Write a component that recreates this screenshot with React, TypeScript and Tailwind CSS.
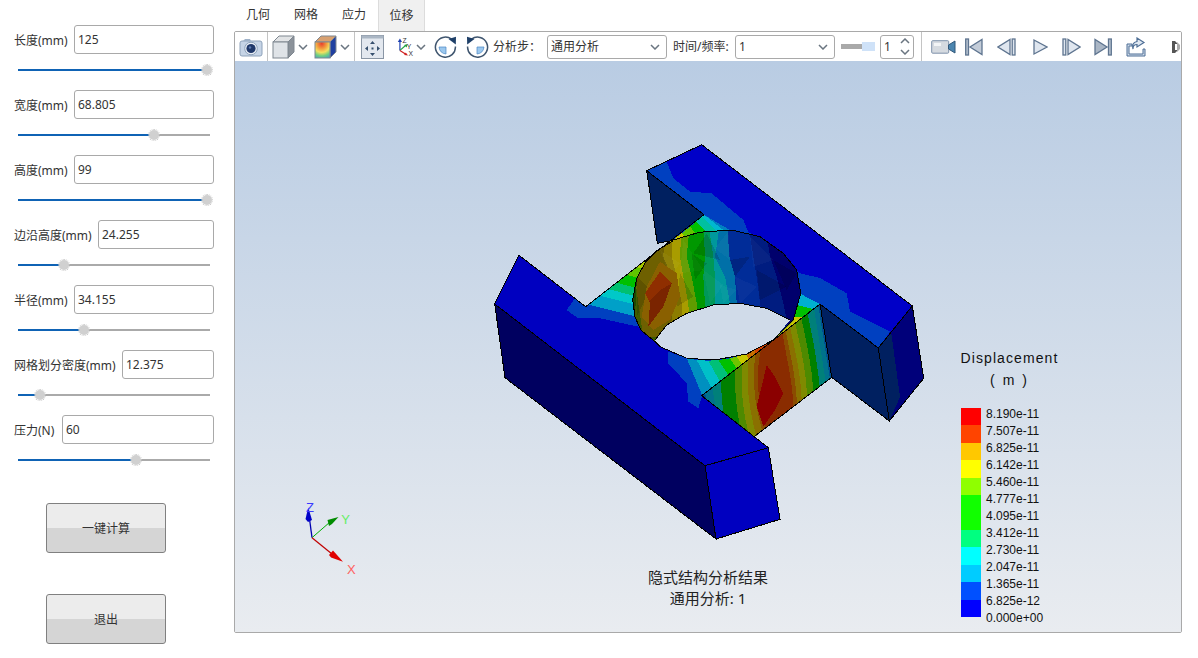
import React from "react";

type P = [number, number];
const FONT = "[font-family:'Noto_Sans','Noto_Sans_CJK_SC',sans-serif]";

const z5 = (x: number, y: number): P => [480 + x / 3, 130 + y / 3];
const z6 = (x: number, y: number): P => [640 + x / 3, 130 + y / 3];
const str = (ps: P[]) => ps.map((p) => `${p[0].toFixed(1)},${p[1].toFixed(1)}`).join(" ");
const z6s = (a: number[][]) => str(a.map(([x, y]) => z6(x, y)));
const z5s = (a: number[][]) => str(a.map(([x, y]) => z5(x, y)));

const P0: P = [701.7, 395.7];
const U: P = [118.3, -91.7];
const V: P = [11.7, 73.3];
const face = (s: number, t: number): P => [P0[0] + s * U[0] + t * V[0], P0[1] + s * U[1] + t * V[1]];

const rim: P[] = [
  z5(575, 335), z5(530, 362), z5(497, 395), z5(470, 445), z5(458, 510), z5(465, 560), z5(482, 600), z5(525, 635),
  z6(60, 650), z6(140, 685), z6(225, 690), z6(320, 672), z6(400, 630), z6(460, 570), z6(482, 490), z6(470, 420),
  z6(430, 370), z6(360, 320), z6(275, 300), z6(178, 307), z6(100, 330),
];
const opening: P[] = [
  z6(45, 630), z6(80, 585), z6(140, 550), z6(220, 525), z6(300, 520), z6(380, 535), z6(450, 570),
  z6(400, 630), z6(320, 672), z6(225, 690), z6(140, 685), z6(60, 650),
];

const wallBands: { c: string; x: number[] }[] = [
  { c: "#6e6000", x: [-5, -10, -15, -5, 10] },
  { c: "#8c7c00", x: [75, 70, 95, 100, 90] },
  { c: "#a89c00", x: [95, 95, 110, 125, 130] },
  { c: "#609c00", x: [125, 120, 130, 145, 150] },
  { c: "#009800", x: [150, 140, 155, 170, 175] },
  { c: "#009858", x: [190, 195, 190, 195, 215] },
  { c: "#00989c", x: [205, 220, 225, 225, 235] },
  { c: "#0070a8", x: [240, 225, 255, 270, 280] },
  { c: "#002c98", x: [262, 268, 285, 290, 320] },
  { c: "#001c80", x: [325, 340, 350, 360, 380] },
  { c: "#00006c", x: [375, 390, 410, 430, 450] },
];
const wallY = [280, 380, 440, 520, 620];

const facets: number[][][] = [
  [[130, 330], [190, 420], [120, 430]], [[200, 310], [240, 390], [160, 370]], [[265, 305], [225, 355], [270, 390]],
  [[270, 390], [330, 380], [285, 440]], [[330, 320], [400, 390], [340, 410]], [[350, 420], [440, 470], [360, 510]],
  [[190, 420], [250, 465], [210, 520]], [[120, 430], [160, 500], [110, 530]], [[285, 440], [350, 470], [300, 520]],
  [[400, 390], [470, 430], [440, 480]], [[60, 360], [120, 400], [90, 440]], [[-10, 440], [30, 480], [-10, 560]],
  [[240, 465], [290, 480], [250, 520]], [[155, 370], [200, 400], [165, 450]],
];

const faceLevels: { c: string; l: number; r: number; k: number }[] = [
  { c: "#004e90", l: 0, r: 1, k: 0 },
  { c: "#00728c", l: 0.03, r: 0.985, k: 0 },
  { c: "#00807a", l: 0.09, r: 0.95, k: 0 },
  { c: "#008000", l: 0.14, r: 0.905, k: 0.03 },
  { c: "#4e8a00", l: 0.25, r: 0.855, k: 0.05 },
  { c: "#7f8a00", l: 0.3, r: 0.805, k: 0.08 },
  { c: "#8a7000", l: 0.35, r: 0.76, k: 0.1 },
  { c: "#8a4c00", l: 0.4, r: 0.72, k: 0.14 },
  { c: "#8a2c00", l: 0.43, r: 0.69, k: 0.2 },
];

function lens(l: number, r: number, k: number): P[] {
  const left: P[] = [];
  const right: P[] = [];
  for (let i = 0; i <= 12; i++) {
    const t = i / 12;
    const g = 1 - k * 4 * (t - 0.6) * (t - 0.6);
    const c = 0.6 - 0.12 * (t - 0.6);
    left.push(face(c - (c - l) * g, t));
    right.unshift(face(c + (r - c) * g, t));
  }
  return [...left, ...right];
}

const lipBounds = [
  [[140, 685], [185, 797]], [[170, 690], [215, 775]], [[205, 692], [240, 755]], [[235, 690], [265, 735]],
  [[270, 685], [290, 715]], [[290, 680], [305, 703]], [[320, 672], [325, 688]], [[345, 660], [345, 672]], [[400, 625], [400, 632]],
];
const lipColors = ["#0090c0", "#00c0c8", "#00c078", "#00c000", "#70c400", "#c8c800", "#c87000", "#d04000"];

const leftBounds = [
  [[325, 524], [490, 565]], [[360, 497], [490, 530]], [[385, 477], [490, 505]], [[410, 458], [490, 480]],
  [[440, 435], [500, 450]], [[470, 412], [510, 420]], [[500, 388], [530, 390]], [[530, 365], [560, 360]], [[575, 332], [590, 345]],
];
const leftColors = ["#00a0c8", "#00c8c8", "#00c070", "#00c000", "#60c400", "#a8c800", "#c8c400", "#c8b000"];

const rightBounds = [
  [[70, 350], [110, 360]], [[125, 310], [150, 340]], [[150, 290], [185, 330]], [[168, 275], [215, 320]],
  [[185, 260], [245, 320]], [[192, 254], [275, 320]], [[212, 266], [320, 330]],
];
const rightColors = ["#c8c800", "#60c400", "#00c000", "#00c0a0", "#00b8d0", "#0080c0"];

function Model() {
  return (
    <svg className="absolute inset-0 h-full w-full" viewBox="235 61 946 571" shapeRendering="crispEdges">
      <defs>
        <clipPath id="rimClip"><polygon points={str(rim)} /></clipPath>
        <clipPath id="faceClip"><polygon points={str([P0, face(1, 0), face(1, 1), face(0, 1)])} /></clipPath>
      </defs>
      <polygon points="646.7,170.7 704,214.7 675,240 657.3,243.3" fill="#002060" stroke="#000" />
      <polygon points="820,304 878.3,348 889.3,421 831.7,377.3" fill="#002060" stroke="#000" />
      <polygon points="878.3,348 912.3,306 923.7,378.3 889.3,421" fill="#00007a" stroke="#000" />
      <polygon points="878.3,348 891,331 900,397 889.3,421" fill="#002060" />
      <polyline points="878.3,348 889.3,421" fill="none" stroke="#000" />
      <polygon points="646.7,170.7 701.7,144.7 912.3,306 878.3,348 820,304 704,214.7" fill="#0000c8" />
      <polygon
        points={str([[646.7, 170.7], [666.7, 161.7], [673.3, 178.3], [690, 191.7], [711.7, 193.3], [743.3, 220], [748.3, 231.7], [800, 273.3], [820, 278], [846.7, 293.3], [850, 311.7], [890, 331.7], [878.3, 348], [820, 304], [704, 214.7]])}
        fill="#0040c0"
      />
      <polygon points="494.7,304 519,255.3 585.7,306.7 640,300 700,350 701.7,395.7 768.3,447.7 705,465.7" fill="#0000c0" />
      <polygon
        points={str([[566.7, 310], [575, 298.3], [585.7, 306.7], [640, 300], [640, 327], [600, 318.3], [578, 318.3]])}
        fill="#0040c0"
      />
      <polygon points="585.7,306.7 704,214.7 820,304 701.7,395.7 690,360 655,342 640,327" fill="#0040c0" />
      {leftColors.map((c, i) => (
        <polygon key={c + i} points={z5s([leftBounds[i][0], leftBounds[i + 1][0], leftBounds[i + 1][1], leftBounds[i][1]])} fill={c} />
      ))}
      {rightColors.map((c, i) => (
        <polygon key={c + i} points={z6s([rightBounds[i][0], rightBounds[i + 1][0], rightBounds[i + 1][1], rightBounds[i][1]])} fill={c} />
      ))}
      {lipColors.map((c, i) => (
        <polygon key={c + i} points={z6s([lipBounds[i][0], lipBounds[i + 1][0], lipBounds[i + 1][1], lipBounds[i][1]])} fill={c} />
      ))}
      <polygon points={z6s([[478, 490], [540, 522], [520, 537], [470, 525]])} fill="#00b0d0" />
      <polygon points={z6s([[470, 525], [520, 537], [490, 560], [462, 560]])} fill="#00c000" />
      <polygon points={z6s([[462, 560], [490, 560], [400, 630], [430, 600]])} fill="#c8c800" />

      <g clipPath="url(#rimClip)">
        <rect x="625" y="220" width="190" height="150" fill="#3f5c00" />
        {wallBands.map((b) => (
          <polygon
            key={b.c}
            points={str([...b.x.map((x, i) => z6(x, wallY[i])), z6(520, 620), z6(520, 280)])}
            fill={b.c}
          />
        ))}
        {facets.map((f, i) => (
          <polygon key={i} points={z6s(f)} fill={i % 2 ? "#000" : "#fff"} opacity={i % 2 ? 0.14 : 0.03} />
        ))}
        <polygon points={z6s([[-40, 440], [-8, 420], [-15, 560], [-5, 600], [-30, 560]])} fill="#1c4a00" />
        <polygon points={z6s([[20, 470], [60, 395], [110, 430], [120, 500], [90, 570], [40, 600], [5, 560]])} fill="#8a6000" />
        <polygon points={z6s([[60, 425], [95, 460], [70, 530], [25, 590], [30, 520], [15, 490]])} fill="#7a2400" />
        <polygon points={z6s([[60, 425], [95, 460], [62, 480], [28, 515], [15, 490]])} fill="#8f2e00" />
      </g>
      <polygon points={str(opening)} fill="#d0dbe9" />
      <polygon points={str(rim)} fill="none" stroke="#000" />
      <polyline points={str(opening.slice(0, 7))} fill="none" stroke="#000" />

      <g clipPath="url(#faceClip)">
        {faceLevels.map((l) => (
          <polygon key={l.c} points={str(lens(l.l, l.r, l.k))} fill={l.c} />
        ))}
        <polygon points={z6s([[380, 705], [405, 740], [430, 790], [405, 840], [370, 890], [350, 830], [365, 770]])} fill="#8b0000" />
      </g>
      <polygon points="701.7,395.7 768.3,447.7 705,465.7 660,420 690,400" fill="#0000c0" />
      <polygon points={z6s([[85, 665], [85, 700], [140, 760], [145, 815], [175, 835], [187, 797], [140, 685]])} fill="#0040c0" />

      <polygon points="494.7,304 505,377.7 716,539 705,465.7" fill="#000060" stroke="#000" />
      <polygon points="705,465.7 768.3,447.7 780,519.3 716,539" fill="#0000c0" stroke="#000" />
      <polyline points="705,465.7 494.7,304 519,255.3 585.7,306.7 704,214.7" fill="none" stroke="#000" />
      <polyline points="646.7,170.7 701.7,144.7 912.3,306 878.3,348 820,304 701.7,395.7 768.3,447.7" fill="none" stroke="#000" />
      <polyline points="646.7,170.7 704,214.7" fill="none" stroke="#000" />
      <polyline points="820,304 831.7,377.3 755,436" fill="none" stroke="#000" />

      <g shapeRendering="auto">
        <line x1="312" y1="537.7" x2="309" y2="515" stroke="#0000b0" strokeWidth="1.3" />
        <polygon points="308.3,507.5 305.5,519 308,522 312,520" fill="#0000c8" />
        <line x1="312" y1="537.7" x2="330" y2="522" stroke="#00b000" strokeWidth="1" />
        <polygon points="338.5,517 327.5,520 329,526 332,524" fill="#008c00" />
        <line x1="312" y1="537.7" x2="332" y2="554" stroke="#c00000" strokeWidth="1.2" />
        <polygon points="343,561.7 333,550.5 329,555 331,557.5" fill="#e00000" />
        <text x="310" y="511.5" textAnchor="middle" fontSize="13" fill="#3a3aff" fontFamily="Liberation Sans">Z</text>
        <text x="345.5" y="524" textAnchor="middle" fontSize="13" fill="#66ee66" fontFamily="Liberation Sans">Y</text>
        <text x="351.3" y="574" textAnchor="middle" fontSize="13" fill="#ff6060" fontFamily="Liberation Sans">X</text>
      </g>
    </svg>
  );
}

const Chevron = () => (
  <svg width="10" height="6" viewBox="0 0 10 6" className="shrink-0">
    <path d="M1 1l4 4 4-4" fill="none" stroke="#6a7580" strokeWidth="1.5" />
  </svg>
);

const Sep = () => <div className="h-[29px] w-px shrink-0 bg-[#c4c4c4]" />;

const CameraIcon = () => (
  <svg width="24" height="20" viewBox="0 0 24 20">
    <rect x="1" y="4" width="22" height="15" rx="2" fill="#c6d4e6" stroke="#8ea2ba" />
    <path d="M4 4l2-2h5l1 2z" fill="#9fb2c9" />
    <circle cx="12" cy="11.5" r="6.3" fill="#e9eef5" stroke="#8ea2ba" />
    <circle cx="12" cy="11.5" r="4.6" fill="#20386a" />
    <circle cx="11" cy="10.5" r="1.2" fill="#5d7bb0" />
  </svg>
);
const CubeIcon = () => (
  <svg width="23" height="24" viewBox="0 0 23 24">
    <path d="M1 7l6-6h15l-6 6z" fill="#e2e4e6" stroke="#7e8790" />
    <path d="M16 7l6-6v16l-6 6z" fill="#8b929a" stroke="#7e8790" />
    <rect x="1" y="7" width="15" height="16" fill="#dfe3e7" stroke="#7e8790" />
  </svg>
);
const ColorCubeIcon = () => (
  <svg width="23" height="24" viewBox="0 0 23 24">
    <defs>
      <radialGradient id="cc1" cx="0.45" cy="0.1" r="1.1">
        <stop offset="0" stopColor="#e8402c" />
        <stop offset="0.3" stopColor="#f2a040" />
        <stop offset="0.5" stopColor="#f4e060" />
        <stop offset="0.7" stopColor="#70d080" />
        <stop offset="1" stopColor="#3090e0" />
      </radialGradient>
    </defs>
    <path d="M1 7l6-6h15l-6 6z" fill="#d8a070" stroke="#7e8790" />
    <path d="M16 7l6-6v16l-6 6z" fill="#2040a0" stroke="#7e8790" />
    <rect x="1" y="7" width="15" height="16" fill="url(#cc1)" stroke="#7e8790" />
  </svg>
);
const FitIcon = () => (
  <svg width="23" height="24" viewBox="0 0 23 24">
    <rect x="0.5" y="0.5" width="22" height="23" fill="#e3e8ef" stroke="#8a96a5" />
    <rect x="0.5" y="0.5" width="22" height="3" fill="#aab6c4" />
    <g fill="#37506e">
      <path d="M11.5 6l2.5 3h-5zM11.5 21l2.5-3h-5zM4 13.5l3-2.5v5zM19 13.5l-3-2.5v5z" />
      <rect x="10.5" y="12.5" width="2" height="2" />
    </g>
  </svg>
);
const AxesIcon = () => (
  <svg width="26" height="24" viewBox="0 0 26 24">
    <path d="M7 16V5" stroke="#1c3fb0" strokeWidth="1.4" />
    <path d="M7 2l2.5 4h-5z" fill="#1c3fb0" />
    <path d="M7 16l7-6" stroke="#20a040" strokeWidth="1.4" />
    <path d="M7 16l7 4.5" stroke="#d02020" strokeWidth="1.4" />
    <path d="M16 8.5l-1 4-3-3z" fill="#20a040" />
    <path d="M16.5 22l-4.5-.5 2-3z" fill="#d02020" />
    <text x="10" y="7" fontSize="8" fill="#333" fontFamily="Liberation Sans">Z</text>
    <text x="15" y="14" fontSize="8" fill="#333" fontFamily="Liberation Sans">Y</text>
    <text x="17" y="23" fontSize="8" fill="#333" fontFamily="Liberation Sans">X</text>
  </svg>
);
const RotateIcon = ({ flip }: { flip?: boolean }) => (
  <svg width="23" height="23" viewBox="0 0 23 23" className={flip ? "-scale-x-100" : ""}>
    <path d="M5 12h7v7a8 8 0 0 1-7-7z" fill="#9cc8ee" stroke="#4b87c4" strokeWidth="0.7" />
    <path d="M17.5 4.2A10 10 0 1 0 21.4 11.5" fill="none" stroke="#40566f" strokeWidth="1.5" />
    <path d="M21.8 9.5L22 1.8 14.5 4z" fill="#1e3f68" />
  </svg>
);

const CFG = { fill: "#dfe6ef", stroke: "#5f7590", strokeWidth: 1.3 };
const VideoIcon = () => (
  <svg width="25" height="16" viewBox="0 0 25 16">
    <rect x="0.7" y="1.7" width="17" height="12.5" rx="1" fill="#d5dae0" stroke="#7e92aa" />
    <rect x="3" y="4" width="7" height="3" fill="#f2f4f6" />
    <path d="M17.5 6l6.5-4v12l-6.5-4z" fill="#4c86b0" stroke="#31587a" />
  </svg>
);
const First = () => (
  <svg width="18" height="18" viewBox="0 0 18 18">
    <rect x="0.7" y="1" width="2.8" height="16" {...CFG} fill="#b8c4d2" />
    <path d="M17 1.5v15L5 9z" {...CFG} fill="#c3ccd8" />
  </svg>
);
const Prev = () => (
  <svg width="19" height="18" viewBox="0 0 19 18">
    <path d="M13 1.5v15L1 9z" {...CFG} />
    <rect x="15.2" y="1" width="2.8" height="16" {...CFG} />
  </svg>
);
const Play = () => (
  <svg width="15" height="18" viewBox="0 0 15 18">
    <path d="M1 2v14l13-7z" {...CFG} />
  </svg>
);
const Next = () => (
  <svg width="19" height="18" viewBox="0 0 19 18">
    <rect x="1" y="1" width="2.8" height="16" {...CFG} />
    <path d="M6 1.5v15L18 9z" {...CFG} />
  </svg>
);
const Last = () => (
  <svg width="18" height="18" viewBox="0 0 18 18">
    <path d="M1 1.5v15L13 9z" {...CFG} fill="#aab6c5" />
    <rect x="14.5" y="1" width="2.8" height="16" {...CFG} fill="#b8c4d2" />
  </svg>
);
const Export = () => (
  <svg width="20" height="20" viewBox="0 0 20 20">
    <path d="M1 7h5v2H3v8h14v-5h2v7H1z" fill="#cfdbe9" stroke="#4f6f96" strokeWidth="1" />
    <path d="M11 1l7 4.5-7 4.5V7.5C8 7.5 7 9 7 12c-1-4 0-7 4-7.5z" fill="#dfe8f2" stroke="#4f6f96" strokeWidth="1.2" />
  </svg>
);
const Overflow = () => (
  <svg width="8" height="16" viewBox="0 0 8 16">
    <path d="M0 2h3l3 3H3v6h3l-3 3H0z" fill="#555" />
    <path d="M5 3l3 3v4l-3 3z" fill="#aaa" />
  </svg>
);

function Combo({ value, w }: { value: string; w: string }) {
  return (
    <div className={`flex h-6 shrink-0 items-center justify-between rounded-[3px] border border-[#a9a9a9] bg-white pl-[3px] pr-[6px] text-xs text-[#333] ${w}`}>
      <span>{value}</span>
      <Chevron />
    </div>
  );
}

const Chevron2 = ({ up }: { up?: boolean }) => (
  <svg width="10" height="6" viewBox="0 0 10 6" className={up ? "rotate-180" : ""}>
    <path d="M1 1l4 4 4-4" fill="none" stroke="#6a7580" strokeWidth="1.5" />
  </svg>
);

function Toolbar() {
  return (
    <div className={`flex h-[29px] items-center bg-white text-xs text-[#333] ${FONT}`}>
      <div className="ml-[4px] flex w-[28px] shrink-0"><CameraIcon /></div>
      <Sep />
      <div className="ml-[4px] flex w-[26px] shrink-0"><CubeIcon /></div>
      <Chevron />
      <div className="ml-[6px] flex w-[26px] shrink-0"><ColorCubeIcon /></div>
      <div className="shrink-0"><Chevron /></div>
      <div className="ml-[4px]"><Sep /></div>
      <div className="ml-[6px] flex w-[23px] shrink-0"><FitIcon /></div>
      <div className="ml-[10px] flex w-[22px] shrink-0"><AxesIcon /></div>
      <div className="shrink-0"><Chevron /></div>
      <div className="ml-[8px] flex w-[23px] shrink-0"><RotateIcon /></div>
      <div className="ml-[9px] flex w-[23px] shrink-0"><RotateIcon flip /></div>
      <span className="ml-[4px] w-[54px] shrink-0 whitespace-nowrap">分析步：</span>
      <Combo value="通用分析" w="w-[120px]" />
      <span className="ml-[6px] w-[62px] shrink-0 whitespace-nowrap">时间/频率:</span>
      <Combo value="1" w="w-[100px]" />
      <div className="ml-[6px] flex h-[7px] w-[34px] shrink-0 items-center">
        <div className="h-[5px] w-[21px] bg-[#a9a9a9]" />
        <div className="h-[9px] w-[13px] bg-[#cfe2f8]" />
      </div>
      <div className="ml-[5px] flex h-6 w-[34px] shrink-0 items-center justify-between rounded-[3px] border border-[#a9a9a9] pl-[3px] pr-[3px]">
        <span>1</span>
        <div className="flex flex-col gap-[5px]">
          <Chevron2 up />
          <Chevron2 />
        </div>
      </div>
      <div className="ml-[7px]"><Sep /></div>
      <div className="ml-[9px] flex w-[34px] shrink-0"><VideoIcon /></div>
      <div className="flex w-[32px] shrink-0"><First /></div>
      <div className="flex w-[36px] shrink-0"><Prev /></div>
      <div className="flex w-[29px] shrink-0"><Play /></div>
      <div className="flex w-[32px] shrink-0"><Next /></div>
      <div className="flex w-[32px] shrink-0"><Last /></div>
      <div className="flex w-[46px] shrink-0"><Export /></div>
      <Overflow />
    </div>
  );
}

const params = [
  { label: "长度(mm)", value: "125", pct: 98.5, inputW: "w-[140px]" },
  { label: "宽度(mm)", value: "68.805", pct: 71, inputW: "w-[140px]" },
  { label: "高度(mm)", value: "99", pct: 98.5, inputW: "w-[140px]" },
  { label: "边沿高度(mm)", value: "24.255", pct: 24, inputW: "w-[116px]" },
  { label: "半径(mm)", value: "34.155", pct: 34.5, inputW: "w-[140px]" },
  { label: "网格划分密度(mm)", value: "12.375", pct: 11.5, inputW: "w-[92px]" },
  { label: "压力(N)", value: "60", pct: 61.5, inputW: "w-[152px]" },
];

function Param({ label, value, pct, inputW }: (typeof params)[number]) {
  return (
    <div className="h-[65px] shrink-0">
      <div className="flex h-[29px] items-center justify-between pl-[14px] pr-5">
        <span className="whitespace-nowrap pt-[2px] text-xs text-[#333]">{label}</span>
        <div className={`flex h-[29px] items-center rounded-[3px] border border-[#a9a9a9] bg-white pl-[3px] pt-[1px] text-xs text-[#333] ${inputW}`}>
          {value}
        </div>
      </div>
      <div className="relative ml-[18px] mt-[15px] h-[2px] w-[192px] bg-[#aaaaaa]">
        <div className="h-full bg-[#0f63b5]" style={{ width: `${pct}%` }} />
        <div
          className="absolute top-[-4px] ml-[-5px] h-[10px] w-[10px] rounded-full bg-[#d0d0d0] outline-1 outline-dotted outline-[#c8c8c8]"
          style={{ left: `${pct}%` }}
        />
      </div>
    </div>
  );
}

function ActionButton({ text, cls }: { text: string; cls: string }) {
  return (
    <div className={`ml-[46px] flex h-[50px] w-[120px] items-center justify-center rounded-[3px] border border-[#808080] bg-[linear-gradient(#ececec_0%,#ececec_50%,#d5d5d5_50%,#d5d5d5_100%)] pt-[1px] text-xs text-[#333] ${cls}`}>
      {text}
    </div>
  );
}

const legend: { c: string; h: string }[] = [
  { c: "#ff0000", h: "h-[17px]" }, { c: "#ff4400", h: "h-[18px]" }, { c: "#ffc800", h: "h-[17px]" }, { c: "#ffff00", h: "h-[18px]" },
  { c: "#8fff00", h: "h-[17px]" }, { c: "#11ff00", h: "h-[35px]" }, { c: "#00ff80", h: "h-[17px]" }, { c: "#00ffff", h: "h-[18px]" },
  { c: "#00ccff", h: "h-[17px]" }, { c: "#0050ff", h: "h-[18px]" }, { c: "#0000ff", h: "h-[17px]" },
];
const labels = ["8.190e-11", "7.507e-11", "6.825e-11", "6.142e-11", "5.460e-11", "4.777e-11", "4.095e-11", "3.412e-11", "2.730e-11", "2.047e-11", "1.365e-11", "6.825e-12", "0.000e+00"];

function Legend() {
  return (
    <div className="absolute left-[725px] top-[286px] w-[110px] text-[#111] [font-family:'Liberation_Sans',sans-serif]">
      <div className="h-[22px] w-[99px] whitespace-nowrap text-center text-sm leading-[22px] tracking-[1.1px]">Displacement</div>
      <div className="h-[22px] w-[99px] text-center text-sm leading-[22px] tracking-[2px]">( m )</div>
      <div className="ml-[1px] mt-[17px] flex">
        <div className="flex w-5 flex-col">
          {legend.map((l) => (
            <div key={l.c} className={l.h} style={{ backgroundColor: l.c }} />
          ))}
        </div>
        <div className="ml-[5px] mt-[-2px] flex flex-col text-xs leading-[17px]">
          {labels.map((l) => (
            <div key={l}>{l}</div>
          ))}
        </div>
      </div>
    </div>
  );
}

export default function App() {
  return (
    <div className={`flex h-[658px] w-[1198px] overflow-hidden bg-white ${FONT}`}>
      <aside className="flex w-[234px] shrink-0 flex-col pt-[25px]">
        {params.map((p) => (
          <Param key={p.label} {...p} />
        ))}
        <ActionButton text="一键计算" cls="mt-[23px]" />
        <ActionButton text="退出" cls="mt-[41px]" />
      </aside>
      <main className="flex w-[948px] shrink-0 flex-col">
        <nav className="flex h-[31px] shrink-0 text-xs text-[#333]">
          <div className="flex h-[30px] w-12 items-center justify-center">几何</div>
          <div className="flex h-[30px] w-12 items-center justify-center">网格</div>
          <div className="flex h-[30px] w-12 items-center justify-center">应力</div>
          <div className="flex h-[31px] w-[47px] items-center justify-center border-x border-[#dcdcdc] bg-[#f0f0f0]">位移</div>
        </nav>
        <section className="flex h-[602px] flex-col overflow-hidden rounded-[2px] border border-[#a9a9a9]">
          <Toolbar />
          <div className="relative flex-1 bg-[linear-gradient(#b9cce3,#e9ecf0)]">
            <Model />
            <Legend />
            <div className="absolute bottom-[23px] left-[353px] w-[240px] text-center text-[15px] leading-[21px] text-[#222]">
              <div>隐式结构分析结果</div>
              <div>通用分析: 1</div>
            </div>
          </div>
        </section>
      </main>
    </div>
  );
}
